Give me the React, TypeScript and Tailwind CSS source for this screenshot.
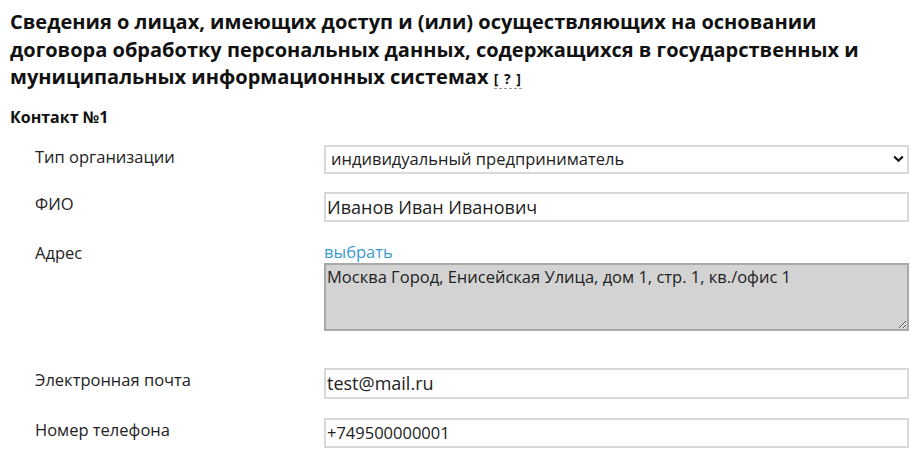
import React from "react";

const inputCls =
  "h-[30px] w-full border-2 border-[#d9d9d9] bg-white px-px text-[#222] outline-none";

function Row({ label, children, className = "" }: { label: string; children: React.ReactNode; className?: string }) {
  return (
    <div className={`flex items-start ${className}`}>
      <div className="w-[289px] shrink-0 pt-[1px] text-[16.5px] leading-[22px] text-[#222]">{label}</div>
      <div className="w-[585px]">{children}</div>
    </div>
  );
}

export default function App() {
  return (
    <main className="min-h-screen bg-white px-[10px] pt-[8px] font-['Open_Sans',sans-serif] text-[#222]">
      <h1 className="w-[880px] text-[20px] font-bold leading-[27.5px] text-[#111]">
        Сведения о лицах, имеющих доступ и (или) осуществляющих на основании договора обработку
        персональных данных, содержащихся в государственных и муниципальных информационных системах{" "}
        <span className="border-b border-dashed border-[#999] text-[14px] leading-none tracking-[1px]">[ ? ]</span>
      </h1>

      <p className="mt-[16px] text-[16px] font-bold leading-[20px] text-[#111]">Контакт №1</p>

      <div className="mt-[18px] flex flex-col pl-[25px]">
        <Row label="Тип организации">
          <div className="relative">
            <select
              defaultValue="ip"
              className="h-[29px] w-full appearance-none border-2 border-[#d9d9d9] bg-white pl-[5px] text-[16.5px] text-[#222] outline-none"
            >
              <option value="ip">индивидуальный предприниматель</option>
              <option value="ul">юридическое лицо</option>
            </select>
            <svg
              className="pointer-events-none absolute right-[5px] top-[10px]"
              width="11"
              height="8"
              viewBox="0 0 11 8"
              fill="none"
            >
              <path d="M1.2 1.5 5.5 5.8 9.8 1.5" stroke="#111" strokeWidth="2.2" />
            </svg>
          </div>
        </Row>

        <Row label="ФИО" className="mt-[18px]">
          <input className={`${inputCls} text-[18px]`} defaultValue="Иванов Иван Иванович" />
        </Row>

        <Row label="Адрес" className="mt-[19px]">
          <a href="#" className="block text-[16.5px] leading-[22px] text-[#3d9ad1] no-underline">
            выбрать
          </a>
          <textarea
            className="block h-[68px] w-full border-2 border-[#a9a9a9] bg-[#d3d3d3] px-[1px] py-0 text-[16.5px] leading-[24px] text-[#222] outline-none"
            defaultValue="Москва Город, Енисейская Улица, дом 1, стр. 1, кв./офис 1"
            readOnly
          />
        </Row>

        <Row label="Электронная почта" className="mt-[37px]">
          <input className={`${inputCls} h-[31px] text-[18px]`} defaultValue="test@mail.ru" />
        </Row>

        <Row label="Номер телефона" className="mt-[19px]">
          <input className={`${inputCls} text-[16.5px]`} defaultValue="+749500000001" />
        </Row>
      </div>
    </main>
  );
}
